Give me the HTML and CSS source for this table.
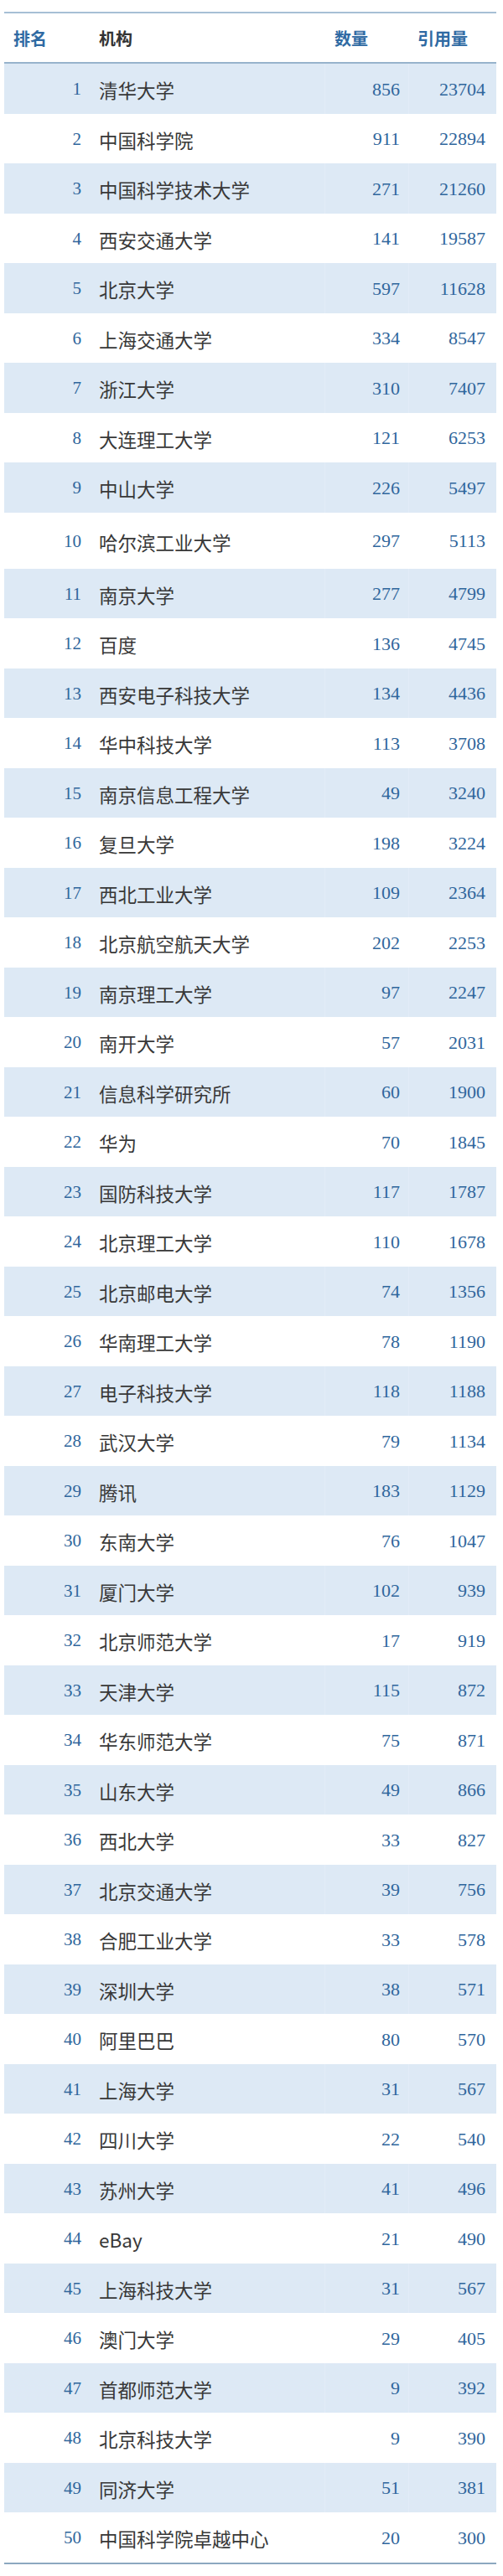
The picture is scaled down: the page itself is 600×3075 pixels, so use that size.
FILE: index.html
```html
<!DOCTYPE html>
<html lang="zh-CN">
<head>
<meta charset="utf-8">
<title>机构排名</title>
<link rel="stylesheet" href="styles.css">
</head>
<body>
<div class="table">
  <div class="row head">
    <div class="c rank h-blue">排名</div>
    <div class="c name h-dark">机构</div>
    <div class="c cnt h-blue">数量</div>
    <div class="c cite h-blue">引用量</div>
  </div>
  <div class="row odd"><div class="c rank">1</div><div class="c name">清华大学</div><div class="c cnt">856</div><div class="c cite">23704</div></div>
  <div class="row"><div class="c rank">2</div><div class="c name">中国科学院</div><div class="c cnt">911</div><div class="c cite">22894</div></div>
  <div class="row odd"><div class="c rank">3</div><div class="c name">中国科学技术大学</div><div class="c cnt">271</div><div class="c cite">21260</div></div>
  <div class="row"><div class="c rank">4</div><div class="c name">西安交通大学</div><div class="c cnt">141</div><div class="c cite">19587</div></div>
  <div class="row odd"><div class="c rank">5</div><div class="c name">北京大学</div><div class="c cnt">597</div><div class="c cite">11628</div></div>
  <div class="row"><div class="c rank">6</div><div class="c name">上海交通大学</div><div class="c cnt">334</div><div class="c cite">8547</div></div>
  <div class="row odd"><div class="c rank">7</div><div class="c name">浙江大学</div><div class="c cnt">310</div><div class="c cite">7407</div></div>
  <div class="row"><div class="c rank">8</div><div class="c name">大连理工大学</div><div class="c cnt">121</div><div class="c cite">6253</div></div>
  <div class="row odd"><div class="c rank">9</div><div class="c name">中山大学</div><div class="c cnt">226</div><div class="c cite">5497</div></div>
  <div class="row tall"><div class="c rank">10</div><div class="c name">哈尔滨工业大学</div><div class="c cnt">297</div><div class="c cite">5113</div></div>
  <div class="row odd"><div class="c rank">11</div><div class="c name">南京大学</div><div class="c cnt">277</div><div class="c cite">4799</div></div>
  <div class="row"><div class="c rank">12</div><div class="c name">百度</div><div class="c cnt">136</div><div class="c cite">4745</div></div>
  <div class="row odd"><div class="c rank">13</div><div class="c name">西安电子科技大学</div><div class="c cnt">134</div><div class="c cite">4436</div></div>
  <div class="row"><div class="c rank">14</div><div class="c name">华中科技大学</div><div class="c cnt">113</div><div class="c cite">3708</div></div>
  <div class="row odd"><div class="c rank">15</div><div class="c name">南京信息工程大学</div><div class="c cnt">49</div><div class="c cite">3240</div></div>
  <div class="row"><div class="c rank">16</div><div class="c name">复旦大学</div><div class="c cnt">198</div><div class="c cite">3224</div></div>
  <div class="row odd"><div class="c rank">17</div><div class="c name">西北工业大学</div><div class="c cnt">109</div><div class="c cite">2364</div></div>
  <div class="row"><div class="c rank">18</div><div class="c name">北京航空航天大学</div><div class="c cnt">202</div><div class="c cite">2253</div></div>
  <div class="row odd"><div class="c rank">19</div><div class="c name">南京理工大学</div><div class="c cnt">97</div><div class="c cite">2247</div></div>
  <div class="row"><div class="c rank">20</div><div class="c name">南开大学</div><div class="c cnt">57</div><div class="c cite">2031</div></div>
  <div class="row odd"><div class="c rank">21</div><div class="c name">信息科学研究所</div><div class="c cnt">60</div><div class="c cite">1900</div></div>
  <div class="row"><div class="c rank">22</div><div class="c name">华为</div><div class="c cnt">70</div><div class="c cite">1845</div></div>
  <div class="row odd"><div class="c rank">23</div><div class="c name">国防科技大学</div><div class="c cnt">117</div><div class="c cite">1787</div></div>
  <div class="row"><div class="c rank">24</div><div class="c name">北京理工大学</div><div class="c cnt">110</div><div class="c cite">1678</div></div>
  <div class="row odd"><div class="c rank">25</div><div class="c name">北京邮电大学</div><div class="c cnt">74</div><div class="c cite">1356</div></div>
  <div class="row"><div class="c rank">26</div><div class="c name">华南理工大学</div><div class="c cnt">78</div><div class="c cite">1190</div></div>
  <div class="row odd"><div class="c rank">27</div><div class="c name">电子科技大学</div><div class="c cnt">118</div><div class="c cite">1188</div></div>
  <div class="row"><div class="c rank">28</div><div class="c name">武汉大学</div><div class="c cnt">79</div><div class="c cite">1134</div></div>
  <div class="row odd"><div class="c rank">29</div><div class="c name">腾讯</div><div class="c cnt">183</div><div class="c cite">1129</div></div>
  <div class="row"><div class="c rank">30</div><div class="c name">东南大学</div><div class="c cnt">76</div><div class="c cite">1047</div></div>
  <div class="row odd"><div class="c rank">31</div><div class="c name">厦门大学</div><div class="c cnt">102</div><div class="c cite">939</div></div>
  <div class="row"><div class="c rank">32</div><div class="c name">北京师范大学</div><div class="c cnt">17</div><div class="c cite">919</div></div>
  <div class="row odd"><div class="c rank">33</div><div class="c name">天津大学</div><div class="c cnt">115</div><div class="c cite">872</div></div>
  <div class="row"><div class="c rank">34</div><div class="c name">华东师范大学</div><div class="c cnt">75</div><div class="c cite">871</div></div>
  <div class="row odd"><div class="c rank">35</div><div class="c name">山东大学</div><div class="c cnt">49</div><div class="c cite">866</div></div>
  <div class="row"><div class="c rank">36</div><div class="c name">西北大学</div><div class="c cnt">33</div><div class="c cite">827</div></div>
  <div class="row odd"><div class="c rank">37</div><div class="c name">北京交通大学</div><div class="c cnt">39</div><div class="c cite">756</div></div>
  <div class="row"><div class="c rank">38</div><div class="c name">合肥工业大学</div><div class="c cnt">33</div><div class="c cite">578</div></div>
  <div class="row odd"><div class="c rank">39</div><div class="c name">深圳大学</div><div class="c cnt">38</div><div class="c cite">571</div></div>
  <div class="row"><div class="c rank">40</div><div class="c name">阿里巴巴</div><div class="c cnt">80</div><div class="c cite">570</div></div>
  <div class="row odd"><div class="c rank">41</div><div class="c name">上海大学</div><div class="c cnt">31</div><div class="c cite">567</div></div>
  <div class="row"><div class="c rank">42</div><div class="c name">四川大学</div><div class="c cnt">22</div><div class="c cite">540</div></div>
  <div class="row odd"><div class="c rank">43</div><div class="c name">苏州大学</div><div class="c cnt">41</div><div class="c cite">496</div></div>
  <div class="row"><div class="c rank">44</div><div class="c name">eBay</div><div class="c cnt">21</div><div class="c cite">490</div></div>
  <div class="row odd"><div class="c rank">45</div><div class="c name">上海科技大学</div><div class="c cnt">31</div><div class="c cite">567</div></div>
  <div class="row"><div class="c rank">46</div><div class="c name">澳门大学</div><div class="c cnt">29</div><div class="c cite">405</div></div>
  <div class="row odd"><div class="c rank">47</div><div class="c name">首都师范大学</div><div class="c cnt">9</div><div class="c cite">392</div></div>
  <div class="row"><div class="c rank">48</div><div class="c name">北京科技大学</div><div class="c cnt">9</div><div class="c cite">390</div></div>
  <div class="row odd"><div class="c rank">49</div><div class="c name">同济大学</div><div class="c cnt">51</div><div class="c cite">381</div></div>
  <div class="row last"><div class="c rank">50</div><div class="c name">中国科学院卓越中心</div><div class="c cnt">20</div><div class="c cite">300</div></div>
</div>
</body>
</html>
```

FILE: styles.css
```css
html, body {
  margin: 0;
  padding: 0;
  background: #ffffff;
}

body {
  padding-top: 14px;
}

.table {
  margin-left: 5px;
  width: 587px;
  border-top: 2px solid #a6bfd5;
}

.row {
  display: grid;
  grid-template-columns: 101px 281px 100px 105px;
  height: 59.5px;
  align-items: center;
}

.row.odd {
  background: #dde9f5;
}

.row.tall {
  height: 67px;
}

.row.last {
  border-bottom: 2px solid #8ca8c0;
}

.row.head {
  height: 58px;
  border-bottom: 2px solid #97b3cc;
  align-items: center;
}

.c {
  height: 100%;
  display: flex;
  align-items: center;
  box-sizing: border-box;
  font-family: "Liberation Serif", "Times New Roman", serif;
  color: #2f669c;
}

.rank {
  justify-content: flex-end;
  padding-right: 9px;
  font-size: 21px;
  padding-top: 2px;
}

.name {
  padding-left: 12px;
  font-family: "Noto Sans CJK SC", "Noto Sans", sans-serif;
  font-size: 22.5px;
  color: #383838;
  font-weight: 400;
  padding-top: 3px;
}

.cnt {
  justify-content: flex-end;
  padding-right: 10px;
  font-size: 22px;
  padding-top: 2px;
}

.cite {
  justify-content: flex-end;
  padding-right: 13px;
  font-size: 22px;
  padding-top: 2px;
}

.row.odd .cnt,
.row.odd .cite {
  border-left: 1px solid #e2ecf7;
}

.head .c {
  justify-content: flex-start;
  font-family: "Noto Sans CJK SC", "Noto Sans", sans-serif;
  font-size: 20px;
  font-weight: 700;
  padding-top: 0;
  padding-right: 0;
}

.head .rank {
  padding-left: 11px;
}

.head .name {
  padding-left: 12px;
}

.head .cnt {
  padding-left: 12px;
}

.head .cite {
  padding-left: 11px;
}

.h-blue {
  color: #2f6aa3;
}

.h-dark {
  color: #333333;
}
```
